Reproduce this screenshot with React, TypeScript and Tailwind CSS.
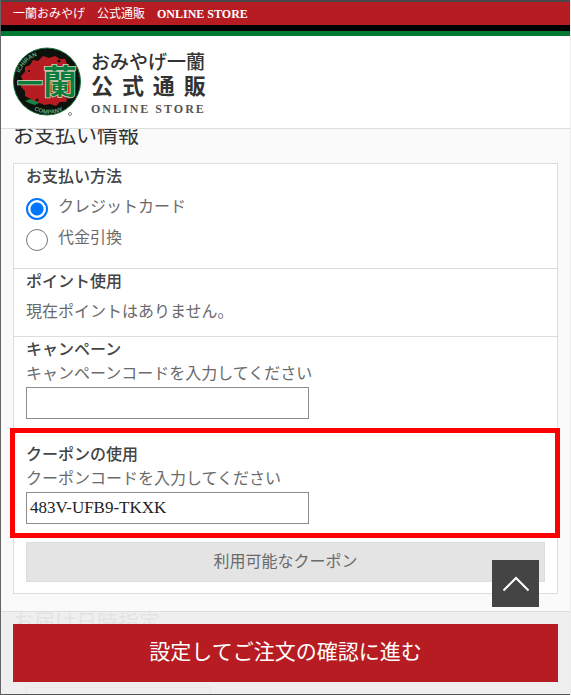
import { useState } from "react";
import type { ReactNode } from "react";

const SERIF = "font-['Liberation_Serif','Noto_Sans_CJK_JP',serif]";

function Logo() {
  return (
    <svg viewBox="0 0 70 70" className="h-[70px] w-[70px] shrink-0" role="img" aria-label="一蘭">
      <defs>
        <path id="arc-top" d="M7 26 A29 29 0 0 1 36 7" />
        <path id="arc-bottom" d="M21 63 A32 32 0 0 0 56 60" />
      </defs>
      <circle cx="34" cy="34.500" r="33.500" fill="#0d120d" stroke="#17733c" strokeWidth="1" />
      <path
        d="M20 13 L25 14 L30 9 L36 11 L42 9 L47 12 L52 12 L54 17 L58 20 L60 26 L59 31 L62 36 L59 41 L60 46 L55 50 L53 55 L47 55 L43 59 L37 57 L31 58 L27 56 L20 56 L18 52 L12 49 L12 44 L8 40 L10 34 L8 29 L12 25 L12 20 L17 18 Z"
        fill="#b71c22"
      />
      <g fill="#0d120d">
        <circle cx="46" cy="14" r="1.500" />
        <circle cx="56" cy="24" r="1.500" />
        <circle cx="16" cy="24" r="1" />
        <circle cx="24" cy="53" r="1.500" />
        <circle cx="54" cy="50" r="1.500" />
      </g>
      <path d="M12 54 L17 52 L22 54 L26 56 L22 58 L16 56 Z" fill="#1a8444" />
      <g
        className="font-['Noto_Sans_CJK_JP',sans-serif] font-bold"
        fill="#0b7c3b"
        stroke="#d6ddc8"
        strokeWidth="1.500"
        paintOrder="stroke"
      >
        <text x="4" y="46" fontSize="26">一</text>
        <text x="30" y="47" fontSize="34">蘭</text>
      </g>
      <g className="font-['Liberation_Sans',sans-serif] font-bold" fill="#5cab7c" fontSize="6">
        <text><textPath href="#arc-top">ICHIRAN</textPath></text>
        <text><textPath href="#arc-bottom">COMPANY</textPath></text>
      </g>
      <circle cx="57" cy="67" r="1.500" fill="none" stroke="#888" strokeWidth="1" />
    </svg>
  );
}

function Header() {
  return (
    <header className="fixed inset-x-0 top-0 z-20 mx-px border-b border-[#ddd] bg-white">
      <div className="h-[25px] border-t-2 border-[#48484a] bg-[#b71c22] px-3 text-[12px] leading-6 text-white">
        一蘭おみやげ　公式通販　<span className="font-bold">ONLINE STORE</span>
      </div>
      <div className="h-[6px] bg-black" />
      <div className="h-[5px] bg-[#007a33]" />
      <div className="flex h-[92px] items-center gap-2 px-3">
        <Logo />
        <div className="flex flex-col pt-1 text-[#333]">
          <span className="text-[19px] leading-6 font-medium">おみやげ一蘭</span>
          <span className="flex justify-between text-[22px] leading-6 font-bold">
            <span>公</span>
            <span>式</span>
            <span>通</span>
            <span>販</span>
          </span>
          <span className="pt-[2px] text-[12px] leading-4 font-bold tracking-[2px] text-[#555]">ONLINE STORE</span>
        </div>
      </div>
    </header>
  );
}

function Section({ title, children }: { title: string; children: ReactNode }) {
  return (
    <section className="border-b border-[#ddd] px-3 last:border-b-0">
      <h3 className="pt-px text-[16px] leading-6 font-medium text-[#444]">{title}</h3>
      {children}
    </section>
  );
}

function CodeField({ id, label, initial }: { id: string; label: string; initial: string }) {
  const [value, setValue] = useState(initial);
  return (
    <div>
      <label htmlFor={id} className="block leading-6">{label}</label>
      <input
        id={id}
        type="text"
        value={value}
        onChange={(e) => setValue(e.target.value)}
        className="mt-px block h-8 w-[283px] max-w-full border border-[#8c8c8c] bg-white px-[3px] text-[17px] text-[#222] outline-none"
      />
    </div>
  );
}

function Payment({ id, label, checked, onSelect }: { id: string; label: string; checked: boolean; onSelect: () => void }) {
  return (
    <div className="flex h-[31px] items-center gap-[10px]">
      <input
        id={id}
        type="radio"
        name="payment"
        checked={checked}
        onChange={onSelect}
        className="mt-1 h-[22px] w-[22px] appearance-none rounded-full border border-[#767676] bg-white checked:border-2 checked:border-[#0075ff] checked:bg-[radial-gradient(circle,#0075ff_6px,white_7px)]"
      />
      <label htmlFor={id}>{label}</label>
    </div>
  );
}

export default function App() {
  const [payment, setPayment] = useState("card");
  return (
    <div className={`h-screen overflow-hidden border-x border-l-[#666] border-r-[#eee] bg-[#fafafa] text-[16px] text-[#6a6a6a] ${SERIF}`}>
      <Header />
      <main className="px-3 pt-[119px]">
        <h2 className="text-[21px] leading-8 text-[#333]">お支払い情報</h2>
        <div className="mt-3 border border-[#ddd] bg-white">
          <Section title="お支払い方法">
            <div className="pt-[2px] pb-[15px]">
              <Payment id="card" label="クレジットカード" checked={payment === "card"} onSelect={() => setPayment("card")} />
              <Payment id="cod" label="代金引換" checked={payment === "cod"} onSelect={() => setPayment("cod")} />
            </div>
          </Section>
          <Section title="ポイント使用">
            <p className="pt-[6px] pb-3 leading-6">現在ポイントはありません。</p>
          </Section>
          <Section title="キャンペーン">
            <CodeField id="campaign" label="キャンペーンコードを入力してください" initial="" />
            <div className="-mr-[15px] -ml-4 mt-[9px] border-[5px] border-[#ff0000] px-[11px] pt-[10px] pb-[9px]">
              <h3 className="leading-6 font-medium text-[#444]">クーポンの使用</h3>
              <CodeField id="coupon" label="クーポンコードを入力してください" initial="483V-UFB9-TKXK" />
            </div>
            <button type="button" className="mt-1 mb-[11px] block h-10 w-full border border-[#ddd] bg-[#e4e4e4] text-[16px]">
              利用可能なクーポン
            </button>
          </Section>
        </div>
        <h2 className="mt-3 text-[21px] leading-8 text-[#333]">お届け日時指定</h2>
        <div className="mt-3 border border-[#ddd] bg-white px-3 pt-9">
          <input type="text" aria-label="お届け日時指定" className="block h-8 w-[185px] border border-[#8c8c8c]" />
        </div>
      </main>
      <a
        href="#root"
        aria-label="ページの先頭へ"
        className="fixed right-8 bottom-[88px] z-20 flex h-[47px] w-[47px] items-center justify-center bg-[#444]"
      >
        <svg viewBox="0 0 28 16" className="h-4 w-7" fill="none" stroke="white" strokeWidth="2">
          <path d="M1.500 14.500 L14 2 L26.500 14.500" />
        </svg>
      </a>
      <div className="fixed inset-x-0 bottom-0 z-10 mx-px border-t border-b border-t-[#ddd] border-b-[#555] bg-[#eeeeee]/94 px-3 pt-3 pb-3">
        <button type="button" className="block h-[58px] w-full bg-[#b71c22] text-[21px] text-white">
          設定してご注文の確認に進む
        </button>
      </div>
    </div>
  );
}
